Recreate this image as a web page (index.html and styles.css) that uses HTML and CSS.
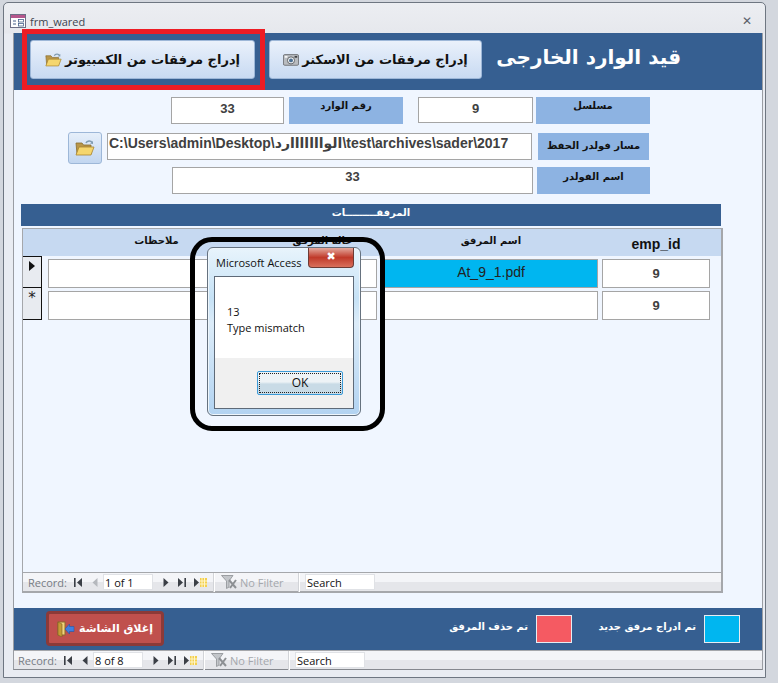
FILE: index.html
```html
<!DOCTYPE html>
<html lang="ar">
<head>
	<meta charset="UTF-8">
	<title>frm_wared</title>
	<link rel="stylesheet" href="styles.css">
</head>
<body>
	<svg class="sprites" width="0" height="0">
		<symbol id="i-folder" viewBox="0 0 20 16">
			<path d="M11 3 C12 0.5 16 0.5 17 2.5" fill="none" stroke="#7f9bb0" stroke-width="1.5"/>
			<path d="M18 1 L18 4 L15 3.5 Z" fill="#7f9bb0"/>
			<path d="M1 3 H7 L8.5 5 H16 V14 H2 Z" fill="#b8964a" stroke="#8a6d2c" stroke-width=".8"/>
			<path d="M4 7 H19 L16 15 H1 Z" fill="#f5d66e" stroke="#a8842f" stroke-width=".8"/>
		</symbol>
		<symbol id="i-camera" viewBox="0 0 18 14">
			<rect x=".5" y="1.5" width="17" height="12" rx="1.5" fill="#b9bcc0" stroke="#6b6e72"/>
			<rect x="2" y="3" width="3" height="2" fill="#f5f5f5"/>
			<rect x="13" y="3" width="3" height="2" fill="#3d3f42"/>
			<circle cx="9" cy="8" r="4" fill="#eef0f2" stroke="#55585c"/>
			<circle cx="9" cy="8" r="2.2" fill="#4b6f93"/>
		</symbol>
		<symbol id="i-exit" viewBox="0 0 18 16">
			<rect x="1" y="1" width="7" height="13" fill="#f1d37a" stroke="#8a6d2c"/>
			<path d="M1 1 L5 3 V16 L1 14 Z" fill="#c59b35" stroke="#7c5f22" stroke-width=".6"/>
			<path d="M17 5.5 H12.5 V3 L8 8 L12.5 13 V10.5 H17 Z" fill="#3f7fe0" stroke="#2458a8" stroke-width=".6"/>
		</symbol>
		<symbol id="i-first" viewBox="0 0 8 9"><rect x="0" y="0" width="1.6" height="9"/><path d="M8 0 V9 L3 4.5 Z"/></symbol>
		<symbol id="i-prev" viewBox="0 0 6 9"><path d="M5.5 0 V9 L.5 4.5 Z"/></symbol>
		<symbol id="i-next" viewBox="0 0 6 9"><path d="M.5 0 V9 L5.5 4.5 Z"/></symbol>
		<symbol id="i-last" viewBox="0 0 8 9"><path d="M0 0 V9 L5 4.5 Z"/><rect x="6.4" y="0" width="1.6" height="9"/></symbol>
		<symbol id="i-new" viewBox="0 0 13 9">
			<path d="M0 0 V9 L5 4.5 Z"/>
			<rect x="6" y="0" width="7" height="9" fill="#f3cf4f"/>
			<path d="M8 0 V9 M10.5 0 V9 M6 3 H13 M6 6 H13" stroke="#fff6c8"/>
		</symbol>
		<symbol id="i-filter" viewBox="0 0 16 14">
			<path d="M.5 .5 H12 L8 6 V12 L5.5 13.5 V6 Z" fill="#c3c6ca" stroke="#9b9ea2"/>
			<path d="M8 5 L15 13 M15 5 L9 13" stroke="#8d9094" stroke-width="2"/>
		</symbol>
	</svg>

	<div class="window">
		<div class="titlebar">
			<svg class="form-icon" width="16" height="14" viewBox="0 0 16 14">
				<rect x=".5" y=".5" width="15" height="13" fill="#fff" stroke="#6d6f86"/>
				<rect x="1" y="1" width="14" height="3" fill="#b5568c"/>
				<path d="M3 7 H6 M3 10 H6" stroke="#47618a"/>
				<rect x="8.5" y="5.5" width="5" height="2.5" fill="#fff" stroke="#47618a" stroke-width=".8"/>
				<rect x="8.5" y="9.5" width="5" height="2.5" fill="#fff" stroke="#47618a" stroke-width=".8"/>
			</svg>
			<span class="form-name">frm_wared</span>
			<span class="win-close">&#10005;</span>
		</div>

		<div class="form">
			<div class="form-head">
				<button class="big-btn btn-pc"><svg width="17" height="14"><use href="#i-folder"/></svg><span>إدراج مرفقات من الكمبيوتر</span></button>
				<button class="big-btn btn-scan"><svg width="16" height="13"><use href="#i-camera"/></svg><span>إدراج مرفقات من الاسكنر</span></button>
				<h1 class="form-title">قيد الوارد الخارجى</h1>
			</div>

			<div class="form-body">
				<div class="row row-top">
					<div class="field f-33">33</div>
					<div class="label l-num">رقم الوارد</div>
					<div class="field f-9">9</div>
					<div class="label l-serial">مسلسل</div>
				</div>
				<div class="row row-path">
					<button class="folder-btn"><svg width="20" height="16"><use href="#i-folder"/></svg></button>
					<div class="field f-path" dir="ltr">C:\Users\admin\Desktop\الوااااااارد\test\archives\sader\2017</div>
					<div class="label l-path">مسار فولدر الحفظ</div>
				</div>
				<div class="row row-folder">
					<div class="field f-folder">33</div>
					<div class="label l-folder">اسم الفولدر</div>
				</div>

				<div class="section-bar">المرفقـــــــــات</div>

				<div class="subform">
					<div class="sub-head">
						<div class="col-notes">ملاحظات</div>
						<div class="col-state">حالة المرفق</div>
						<div class="col-file">اسم المرفق</div>
						<div class="col-id head-id">emp_id</div>
					</div>
					<div class="sub-row">
						<div class="selector"><span class="arrow"></span></div>
						<div class="cell col-notes"></div>
						<div class="cell col-state"></div>
						<div class="cell col-file file-new">At_9_1.pdf</div>
						<div class="cell col-id">9</div>
					</div>
					<div class="sub-row">
						<div class="selector star">*</div>
						<div class="cell col-notes"></div>
						<div class="cell col-state"></div>
						<div class="cell col-file"></div>
						<div class="cell col-id">9</div>
					</div>
					<div class="sub-space"></div>
					<div class="nav nav-sub">
						<span class="nav-label">Record:</span>
						<svg class="n-first" width="8" height="9"><use href="#i-first"/></svg>
						<svg class="n-prev off" width="6" height="9"><use href="#i-prev"/></svg>
						<span class="nav-input nav-pos">1 of 1</span>
						<svg class="n-next" width="6" height="9"><use href="#i-next"/></svg>
						<svg class="n-last" width="8" height="9"><use href="#i-last"/></svg>
						<svg class="n-new" width="13" height="9"><use href="#i-new"/></svg>
						<span class="nav-sep"></span>
						<svg class="n-filter" width="16" height="14"><use href="#i-filter"/></svg>
						<span class="nav-filter">No Filter</span>
						<span class="nav-sep"></span>
						<span class="nav-input nav-search">Search</span>
					</div>
				</div>
			</div>

			<div class="form-foot">
				<button class="close-btn"><svg width="18" height="16"><use href="#i-exit"/></svg><span>إغلاق الشاشة</span></button>
				<span class="legend-text text-del">تم حذف المرفق</span>
				<span class="swatch swatch-red"></span>
				<span class="legend-text text-add">تم ادراج مرفق جديد</span>
				<span class="swatch swatch-blue"></span>
			</div>

			<div class="nav nav-main">
				<span class="nav-label">Record:</span>
				<svg class="n-first" width="8" height="9"><use href="#i-first"/></svg>
				<svg class="n-prev" width="6" height="9"><use href="#i-prev"/></svg>
				<span class="nav-input nav-pos">8 of 8</span>
				<svg class="n-next" width="6" height="9"><use href="#i-next"/></svg>
				<svg class="n-last" width="8" height="9"><use href="#i-last"/></svg>
				<svg class="n-new" width="13" height="9"><use href="#i-new"/></svg>
				<span class="nav-sep"></span>
				<svg class="n-filter" width="16" height="14"><use href="#i-filter"/></svg>
				<span class="nav-filter">No Filter</span>
				<span class="nav-sep"></span>
				<span class="nav-input nav-search">Search</span>
			</div>
		</div>
	</div>

	<!-- annotations and message box lying over the form -->
	<div class="mark-red"></div>
	<div class="msgbox">
		<div class="msg-title">Microsoft Access</div>
		<div class="msg-close">&#10006;</div>
		<div class="msg-inner">
			<div class="msg-text">13<br>Type mismatch</div>
			<div class="msg-actions"><button class="msg-ok"><span>OK</span></button></div>
		</div>
	</div>
	<div class="mark-black"></div>
</body>
</html>
```

FILE: styles.css
```css
* {
	box-sizing: border-box;
}
html, body {
	margin: 0;
	padding: 0;
	height: 683px;
	overflow: hidden;
}
body {
	position: relative;
	background-color: #d3d7de;
	font-family: "Liberation Sans", "DejaVu Sans", sans-serif;
}
button {
	font-family: inherit;
	padding: 0;
	cursor: pointer;
}
.sprites {
	position: absolute;
}

/* window */
.window {
	margin: 2px 0 0 3px;
	width: 763px;
	height: 676px;
	border: 1px solid #6e7681;
	border-radius: 5px 5px 0 0;
	background: linear-gradient(#eceef2, #e6e8ed 30px, #e9ecf2 31px);
	padding-left: 9px;
}
.titlebar {
	display: flex;
	align-items: center;
	height: 30px;
	margin-left: -3px;
	padding-top: 6px;
}
.form-name {
	margin-left: 4px;
	font-family: "Open Sans", sans-serif;
	font-size: 11px;
	color: #3d4450;
}
.win-close {
	margin-left: auto;
	margin-right: 13px;
	font-size: 12px;
	color: #5a6068;
	font-family: "DejaVu Sans", sans-serif;
}
.form {
	width: 750px;
	border-right: 1px solid #9a9da3;
	border-bottom: 1px solid #85888e;
	border-left: 1px solid #9a9da3;
	margin-left: 0;
}

/* header */
.form-head {
	display: flex;
	align-items: flex-start;
	height: 57px;
	padding: 7px 0 0 16px;
	background-color: #365f91;
}
.big-btn {
	display: flex;
	align-items: center;
	justify-content: center;
	gap: 3px;
	height: 39px;
	border: 1px solid #9db7d8;
	border-radius: 3px;
	background: linear-gradient(#eaf1fb, #c8daf2);
	font-family: "DejaVu Sans", sans-serif;
	font-size: 13px;
	font-weight: bold;
	color: #111;
}
.big-btn span {
	direction: rtl;
}
.btn-pc {
	width: 225px;
}
.btn-scan {
	width: 213px;
	margin-left: 14px;
}
.form-title {
	margin: 5px 0 0 32px;
	width: 167px;
	font-family: "DejaVu Sans", sans-serif;
	font-size: 20px;
	font-weight: bold;
	color: #fff;
	text-align: center;
	white-space: nowrap;
	direction: rtl;
}

/* top fields */
.form-body {
	height: 518px;
	padding-top: 7px;
	background-color: #f0f6ff;
}
.row {
	display: flex;
}
.row-top {
	height: 27px;
	padding-left: 157px;
}
.row-path {
	height: 32px;
	margin-top: 8px;
	padding-left: 54px;
}
.row-folder {
	height: 27px;
	margin-top: 3px;
	padding-left: 158px;
}
.field {
	height: 27px;
	border: 1px solid #a5a5a5;
	background-color: #fff;
	font-size: 13px;
	font-weight: bold;
	color: #404040;
	text-align: center;
	padding-top: 3px;
}
.label {
	height: 27px;
	background-color: #8db3e2;
	font-family: "DejaVu Sans", sans-serif;
	font-size: 10px;
	font-weight: bold;
	color: #111;
	text-align: center;
	padding-top: 3px;
	direction: rtl;
}
.f-33 { width: 113px; }
.l-num { width: 114px; margin-left: 5px; }
.f-9 { width: 115px; height: 26px; margin-left: 15px; }
.l-serial { width: 114px; margin-left: 3px; }
.folder-btn {
	width: 34px;
	height: 32px;
	border: 1px solid #9db7d8;
	border-radius: 3px;
	background: linear-gradient(#e6effa, #c2d6f0);
	display: flex;
	align-items: center;
	justify-content: center;
}
.f-path {
	width: 425px;
	margin: 1px 0 0 5px;
	font-size: 14px;
	text-align: left;
	padding: 1px 0 0 1px;
	white-space: nowrap;
	overflow: hidden;
}
.l-path { width: 111px; margin: 1px 0 0 6px; padding-top: 7px; }
.f-folder { width: 361px; padding-top: 1px; }
.l-folder { width: 113px; margin-left: 4px; padding-top: 4px; }

/* attachments */
.section-bar {
	width: 700px;
	height: 22px;
	margin: 10px 0 0 7px;
	background-color: #365f91;
	font-family: "DejaVu Sans", sans-serif;
	font-size: 10px;
	font-weight: bold;
	color: #fff;
	text-align: center;
	padding-top: 3px;
	direction: rtl;
}
.subform {
	width: 701px;
	height: 365px;
	margin: 2px 0 0 8px;
	border: 1px solid #a5a7ab;
	border-right-width: 2px;
	border-bottom-width: 2px;
	display: flex;
	flex-direction: column;
}
.sub-head {
	display: flex;
	height: 27px;
	padding: 6px 0 0 25px;
	background-color: #c6d9f1;
	font-family: "DejaVu Sans", sans-serif;
	font-size: 10px;
	font-weight: bold;
	color: #111;
	text-align: center;
}
.sub-head div {
	direction: rtl;
}
.sub-head .head-id {
	direction: ltr;
	font-family: "Liberation Sans", sans-serif;
	font-size: 14px;
	margin-top: 1px;
}
.col-notes { width: 217px; margin-right: 3px; }
.col-state { width: 109px; margin-right: 7px; }
.col-file { width: 214px; margin-right: 4px; }
.col-id { width: 108px; }
.sub-row {
	display: flex;
	height: 32px;
	padding-top: 3px;
}
.sub-row + .sub-row {
	height: 33px;
}
.selector {
	width: 19px;
	margin: -3px 6px 0 0;
	background-color: #e8ebf0;
	border-top: 1px solid #111;
	border-right: 1px solid #111;
	border-bottom: 1px solid #111;
	text-align: center;
}
.sub-row + .sub-row .selector {
	border-top: none;
	margin-bottom: 1px;
	font-family: "DejaVu Sans", sans-serif;
	font-size: 15px;
	line-height: 20px;
	color: #222;
}
.arrow {
	display: inline-block;
	margin-top: 3px;
	border-top: 5px solid transparent;
	border-bottom: 5px solid transparent;
	border-left: 6px solid #111;
}
.cell {
	height: 29px;
	border: 1px solid #a5a5a5;
	background-color: #fff;
	font-size: 13px;
	font-weight: bold;
	color: #404040;
	text-align: center;
	padding-top: 6px;
}
.file-new {
	background-color: #00b6f0;
	font-size: 14px;
	font-weight: normal;
	color: #222;
	padding-top: 4px;
}
.sub-space {
	flex: 1;
}

/* record navigators */
.nav {
	display: flex;
	align-items: center;
	height: 19px;
	background: linear-gradient(#f4f5f8 50%, #e5e6ea 50%);
	font-family: "Open Sans", sans-serif;
	font-size: 11px;
	color: #777c85;
}
.nav svg {
	flex: none;
	fill: #3b3f46;
}
.nav svg.off {
	fill: #b5b8bd;
}
.nav-main {
	padding-left: 4px;
	height: 19px;
	border-top: 1px solid #a5a7ab;
}
.nav-sub {
	padding-left: 5px;
	border-top: 1px solid #a5a7ab;
}
.nav-label {
	width: 46px;
}
.n-prev { margin: 0 5px 0 10px; }
.nav-input {
	height: 16px;
	line-height: 15px;
	background-color: #fff;
	border: 1px solid #e0e2e6;
	color: #111;
	padding-left: 1px;
}
.nav-pos { width: 50px; }
.n-next { margin-left: 10px; }
.n-last { margin-left: 9px; }
.n-new { margin-left: 8px; }
.nav-sep {
	width: 2px;
	height: 19px;
	margin-left: 6px;
	background-color: #d2d4d8;
	border-right: 1px solid #fff;
}
.n-filter { margin-left: 6px; }
.nav-filter {
	width: 52px;
	margin-left: 3px;
	color: #a5a8ad;
}
.nav-search {
	width: 70px;
	margin-left: 5px;
}

/* footer */
.form-foot {
	display: flex;
	align-items: flex-start;
	height: 42px;
	background-color: #365f91;
	padding: 3px 0 0 32px;
}
.close-btn {
	display: flex;
	align-items: center;
	justify-content: center;
	gap: 4px;
	width: 118px;
	height: 35px;
	border: 3px solid #8c3a38;
	border-radius: 4px;
	background-color: #c0504d;
	font-family: "DejaVu Sans", sans-serif;
	font-size: 11px;
	font-weight: bold;
	color: #fff;
}
.close-btn span {
	direction: rtl;
}
.legend-text {
	font-family: "DejaVu Sans", sans-serif;
	font-size: 10px;
	font-weight: bold;
	color: #fff;
	margin-top: 10px;
	direction: rtl;
	white-space: nowrap;
	text-align: left;
}
.text-del {
	width: 76px;
	margin-left: 288px;
}
.text-add {
	width: 96px;
	margin-left: 28px;
}
.swatch {
	width: 36px;
	height: 28px;
	margin: 4px 0 0 8px;
	border: 1px solid #e8ecf2;
}
.swatch-red { background-color: #f55a62; }
.swatch-blue { background-color: #00b6f0; }

/* annotations */
.mark-red {
	position: absolute;
	left: 22px;
	top: 29px;
	width: 243px;
	height: 61px;
	border: 5px solid #ed1c24;
}
.mark-black {
	position: absolute;
	left: 190px;
	top: 237px;
	width: 195px;
	height: 194px;
	border: 5px solid #000;
	border-radius: 22px;
}

/* message box */
.msgbox {
	position: absolute;
	left: 207px;
	top: 247px;
	width: 154px;
	height: 169px;
	border: 1px solid #66727f;
	border-radius: 6px;
	background: linear-gradient(#e8f4fc, #c6e2f6 30%, #dcecf9 45%, #b2d3f1);
	box-shadow: inset 0 0 0 1px #eef6fc;
	font-family: "Open Sans", sans-serif;
	font-size: 11px;
	color: #111;
}
.msg-title {
	margin: 7px 0 0 8px;
}
.msg-close {
	position: absolute;
	left: 100px;
	top: 0;
	width: 46px;
	height: 20px;
	border: 1px solid #6d3b35;
	border-top: none;
	border-radius: 0 0 4px 4px;
	background: linear-gradient(#e4a89c, #c03a2a 50%, #d9705c);
	color: #fff;
	font-family: "DejaVu Sans", sans-serif;
	font-size: 11px;
	line-height: 17px;
	text-align: center;
}
.msg-inner {
	display: flex;
	flex-direction: column;
	height: 133px;
	margin: 6px 6px 0 6px;
	border: 1px solid #5e6a78;
	background-color: #fff;
}
.msg-text {
	flex: 1;
	padding: 27px 0 0 12px;
	line-height: 16px;
}
.msg-actions {
	display: flex;
	justify-content: flex-end;
	height: 50px;
	padding: 13px 10px 0 0;
	background-color: #f0f0f0;
}
.msg-ok {
	width: 86px;
	height: 24px;
	border: 1px solid #3c9bd8;
	border-radius: 2px;
	background: linear-gradient(#eef3f6 45%, #c9dbe6 55%);
	font-family: inherit;
	font-size: 12px;
	color: #111;
	padding: 1px;
}
.msg-ok span {
	display: block;
	height: 100%;
	border: 1px dotted #222;
	line-height: 18px;
}
```
